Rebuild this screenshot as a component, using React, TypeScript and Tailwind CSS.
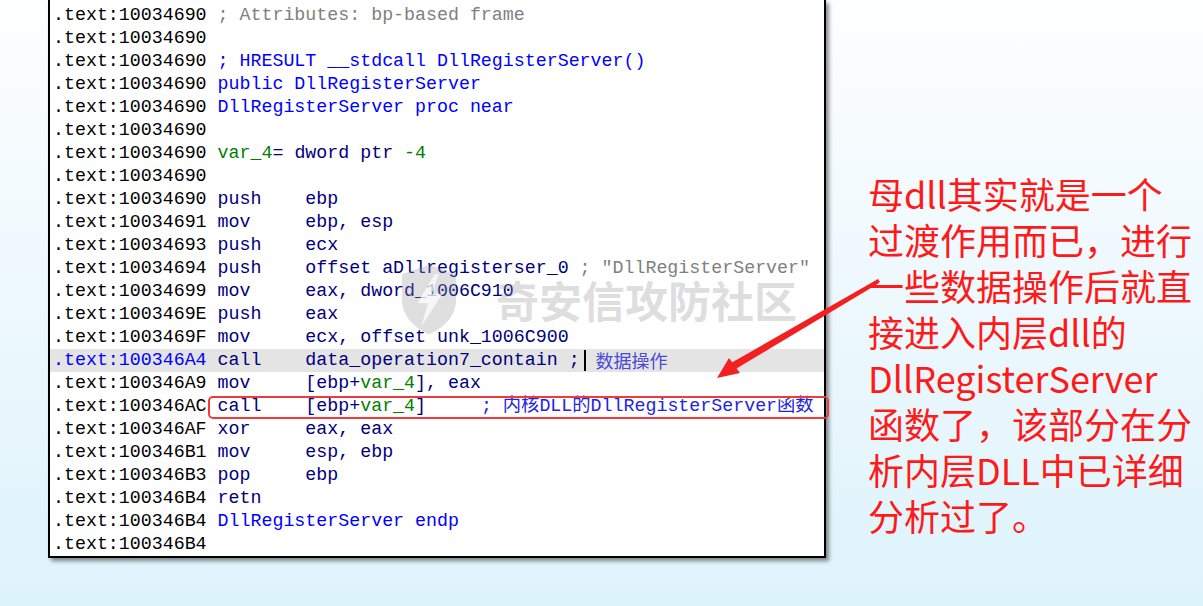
import React from "react";

type Seg = [string, string];
type Row = { addr: string; segs: Seg[]; hl?: boolean; boxed?: boolean; note?: string };

const N = "text-[#000080]";
const B = "text-[#0000ff]";
const G = "text-[#008000]";
const Gy = "text-[#808080]";

const rows: Row[] = [
  { addr: "10034690", segs: [["; Attributes: bp-based frame", Gy]] },
  { addr: "10034690", segs: [] },
  { addr: "10034690", segs: [["; HRESULT __stdcall DllRegisterServer()", B]] },
  { addr: "10034690", segs: [["public DllRegisterServer", B]] },
  { addr: "10034690", segs: [["DllRegisterServer proc near", B]] },
  { addr: "10034690", segs: [] },
  { addr: "10034690", segs: [["var_4", G], ["= dword ptr ", N], ["-4", G]] },
  { addr: "10034690", segs: [] },
  { addr: "10034690", segs: [["push    ebp", N]] },
  { addr: "10034691", segs: [["mov     ebp, esp", N]] },
  { addr: "10034693", segs: [["push    ecx", N]] },
  { addr: "10034694", segs: [["push    offset aDllregisterser_0 ", N], ['; "DllRegisterServer"', Gy]] },
  { addr: "10034699", segs: [["mov     eax, dword_1006C910", N]] },
  { addr: "1003469E", segs: [["push    eax", N]] },
  { addr: "1003469F", segs: [["mov     ecx, offset unk_1006C900", N]] },
  { addr: "100346A4", segs: [["call    data_operation7_contain ;", N]], hl: true, note: "数据操作" },
  { addr: "100346A9", segs: [["mov     [ebp+", N], ["var_4", G], ["], eax", N]] },
  {
    addr: "100346AC",
    segs: [["call    [ebp+", N], ["var_4", G], ["]     ", N], ["; 内核DLL的DllRegisterServer函数", "text-[#2323e6]"]],
    boxed: true,
  },
  { addr: "100346AF", segs: [["xor     eax, eax", N]] },
  { addr: "100346B1", segs: [["mov     esp, ebp", N]] },
  { addr: "100346B3", segs: [["pop     ebp", N]] },
  { addr: "100346B4", segs: [["retn", N]] },
  { addr: "100346B4", segs: [["DllRegisterServer endp", B]] },
  { addr: "100346B4", segs: [] },
];

const notes = [
  "母dll其实就是一个",
  "过渡作用而已，进行",
  "一些数据操作后就直",
  "接进入内层dll的",
  "DllRegisterServer",
  "函数了，该部分在分",
  "析内层DLL中已详细",
  "分析过了。",
];

function CodeRow({ r }: { r: Row }) {
  return (
    <div
      className={`relative flex h-[23px] items-center whitespace-pre pl-[3px] leading-[23px] ${
        r.hl ? "bg-[#e4e4e4]" : ""
      }`}
    >
      <span className={r.hl ? B : "text-black"}>.text:{r.addr} </span>
      {r.segs.map((s, i) => (
        <span key={i} className={s[1]}>
          {s[0]}
        </span>
      ))}
      {r.note && (
        <>
          <span className="ml-[4px] inline-block h-[21px] w-[2px] bg-black" />
          <span className="ml-[10px] font-['Noto_Sans_CJK_SC',sans-serif] text-[18px] text-[#4a4ad6]">
            {r.note}
          </span>
        </>
      )}
      {r.boxed && (
        <span className="absolute left-[158px] top-[1px] h-[23px] w-[621px] rounded-[5px] border-2 border-[#ee3b3b]" />
      )}
    </div>
  );
}

export default function App() {
  return (
    <div className="relative flex h-[606px] w-[1203px] items-start overflow-hidden bg-linear-to-b from-[#fdfeff] to-[#ddf3fb]">
      <div className="relative ml-[48px] h-[558px] w-[778px] shrink-0 border-x-2 border-b-2 border-black bg-white pt-[4px] font-['Liberation_Mono','Noto_Sans_CJK_SC',monospace] text-[18.3px] shadow-[3px_3px_4px_rgba(0,0,0,0.45)]">
        {rows.map((r, i) => (
          <CodeRow key={i} r={r} />
        ))}
      </div>

      <div className="pl-[42px] pt-[170px] font-['Noto_Sans_CJK_SC',sans-serif] text-[36px] leading-[46px] text-[#ff1a1a]">
        {notes.map((n, i) => (
          <div key={i} className="whitespace-nowrap">
            {n}
          </div>
        ))}
      </div>

      {/* watermark */}
      <div className="pointer-events-none absolute left-[400px] top-[262px] flex items-center gap-[38px]">
        <svg width="58" height="74" viewBox="0 0 60 75">
          <path
            d="M30 2 L58 12 L58 38 C58 56 44 68 30 74 C16 68 2 56 2 38 L2 12 Z"
            fill="rgba(150,150,150,0.3)"
          />
          <path d="M36 12 L18 42 L29 42 L22 66 L44 32 L33 32 L40 12 Z" fill="rgba(255,255,255,0.7)" />
        </svg>
        <span className="font-['Noto_Sans_CJK_SC',sans-serif] text-[43px] font-bold leading-[43px] text-[rgba(150,150,150,0.33)]">
          奇安信攻防社区
        </span>
      </div>

      {/* arrow */}
      <svg className="pointer-events-none absolute left-0 top-0" width="1203" height="606">
        <polygon points="880,282 876,285 734,370 731,363 878,279" fill="#f22020" />
        <polygon points="717,378 729,358 740,373" fill="#f22020" />
      </svg>
    </div>
  );
}
